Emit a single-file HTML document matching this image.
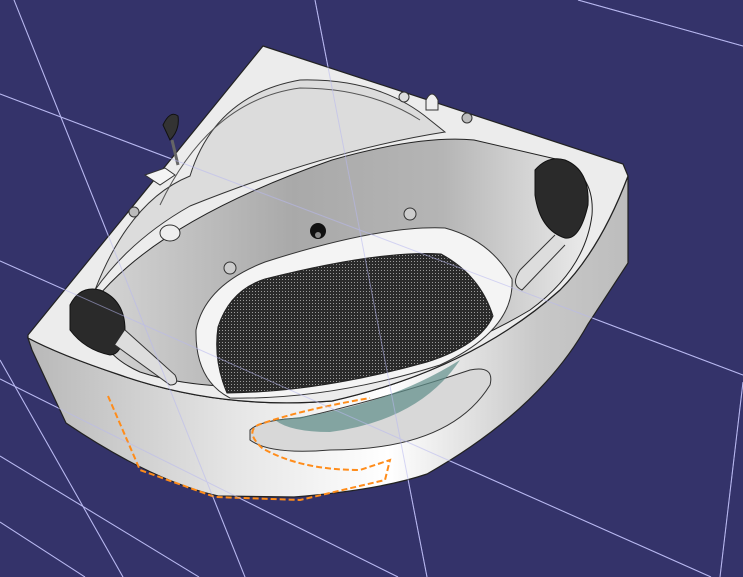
<!DOCTYPE html>
<html><head><meta charset="utf-8"><style>html,body{margin:0;padding:0;background:#34336a;overflow:hidden}svg{display:block}</style></head>
<body>
<svg width="743" height="577" viewBox="0 0 743 577" xmlns="http://www.w3.org/2000/svg">
<defs>
<linearGradient id="ap" x1="0" y1="0" x2="1" y2="0">
<stop offset="0" stop-color="#b8b8b8"/><stop offset="0.35" stop-color="#e6e6e6"/><stop offset="0.6" stop-color="#ffffff"/><stop offset="0.85" stop-color="#c8c8c8"/><stop offset="1" stop-color="#bdbdbd"/></linearGradient>
<linearGradient id="wall" x1="0" y1="0" x2="1" y2="0">
<stop offset="0" stop-color="#d5d5d5"/><stop offset="0.4" stop-color="#a9a9a9"/><stop offset="0.7" stop-color="#b5b5b5"/><stop offset="1" stop-color="#ececec"/></linearGradient>
<pattern id="mesh" width="3" height="3" patternUnits="userSpaceOnUse"><rect width="3" height="3" fill="#2a2a2a"/><rect width="1" height="1" fill="#9a9a9a"/></pattern>
</defs>
<g id="grid" stroke="#b8b8f0" stroke-width="1" fill="none">
<line x1="0" y1="94" x2="743" y2="375"/>
<line x1="0" y1="261" x2="711" y2="577"/>
<line x1="0" y1="379" x2="398" y2="577"/>
<line x1="0" y1="456" x2="199" y2="577"/>
<line x1="0" y1="522" x2="85" y2="577"/>
<line x1="578" y1="0" x2="743" y2="46"/>
<line x1="14" y1="0" x2="245" y2="577"/>
<line x1="315" y1="0" x2="427" y2="577"/>
<line x1="743" y1="382" x2="720" y2="577"/>
<line x1="0" y1="360" x2="123" y2="577"/>
</g>
<path d="M28,338 L32,350 L66,423 Q150,480 218,496 L294,497 Q380,490 427,474 Q540,410 588,324 L628,263 L628,176 Q600,250 560,290 Q470,370 332,401 Q220,410 120,375 Q60,355 28,338Z" fill="url(#ap)" stroke="#222" stroke-width="1.2"/>
<path d="M28,335 L263,46 L623,164 L628,176 Q600,250 560,290 Q470,370 332,401 Q220,410 120,375 Q60,355 28,338Z" fill="#ececec" stroke="#222" stroke-width="1.2"/>
<path d="M95,290 Q130,200 190,176 Q215,95 300,80 Q380,78 430,120 L445,132 Q330,150 190,206 Q130,240 95,290Z" fill="#dcdcdc" stroke="#333" stroke-width="1"/>
<path d="M160,205 Q210,100 300,88 Q370,88 420,120" fill="none" stroke="#555" stroke-width="1"/>
<path d="M95,300 Q160,220 332,160 Q420,135 474,140 L560,160 Q595,175 592,215 Q585,270 530,310 Q430,370 300,385 Q200,392 140,372 Q90,350 95,300Z" fill="url(#wall)" stroke="#222" stroke-width="1"/>
<path d="M196,330 Q205,285 265,262 Q380,225 445,228 Q490,240 512,279 Q515,330 440,365 Q330,400 230,398 Q195,380 196,330Z" fill="#f4f4f4" stroke="#333" stroke-width="1"/>
<path d="M218,327 Q230,290 265,279 Q380,250 441,254 Q480,275 493,316 Q480,345 427,362 Q320,392 227,393 Q213,360 218,327Z" fill="url(#mesh)" stroke="#222"/>
<path d="M250,430 Q260,420 300,418 Q380,400 470,370 Q495,365 490,385 Q450,450 330,450 Q270,455 250,440Z" fill="#d8d8d8" stroke="#333"/>
<path d="M275,420 Q380,410 460,360 Q420,420 330,432 Q290,432 275,420Z" fill="#5f8f8a" opacity="0.7"/>
<path d="M108,396 L140,470 L215,497 L300,500 L385,480 L390,460 L360,470 Q300,470 262,448 Q245,432 258,425 Q300,410 370,398" fill="none" stroke="#ff8c1a" stroke-width="2" stroke-dasharray="6 3"/>
<path d="M70,305 Q80,285 100,290 Q125,300 125,330 Q122,355 110,355 Q85,350 70,330Z" fill="#2a2a2a" stroke="#111"/>
<path d="M125,330 L175,375 Q180,385 170,385 L115,345" fill="#ddd" stroke="#333"/>
<path d="M535,170 Q548,155 565,160 Q590,170 588,205 Q580,240 565,238 Q540,230 535,195Z" fill="#2a2a2a" stroke="#111"/>
<path d="M555,235 L520,270 Q510,285 522,290 L565,245" fill="#ddd" stroke="#333"/>
<circle cx="318" cy="231" r="8" fill="#111"/>
<circle cx="318" cy="235" r="3" fill="#888"/>
<circle cx="410" cy="214" r="6" fill="#ccc" stroke="#333"/>
<circle cx="230" cy="268" r="6" fill="#ccc" stroke="#333"/>
<ellipse cx="170" cy="233" rx="10" ry="8" fill="#eee" stroke="#333"/>
<path d="M163,125 Q170,110 178,116 Q180,130 170,140 Z" fill="#333" stroke="#111"/>
<path d="M145,175 L165,168 L175,175 L160,185Z" fill="#f4f4f4" stroke="#333"/>
<line x1="172" y1="140" x2="178" y2="165" stroke="#666" stroke-width="3"/>
<circle cx="134" cy="212" r="5" fill="#bbb" stroke="#333"/>
<circle cx="404" cy="97" r="5" fill="#ddd" stroke="#333"/>
<path d="M426,100 Q432,88 438,100 L438,110 L426,110Z" fill="#eee" stroke="#333"/>
<circle cx="467" cy="118" r="5" fill="#bbb" stroke="#333"/>
<use href="#grid" opacity="0.55"/>
</svg>
</body></html>
